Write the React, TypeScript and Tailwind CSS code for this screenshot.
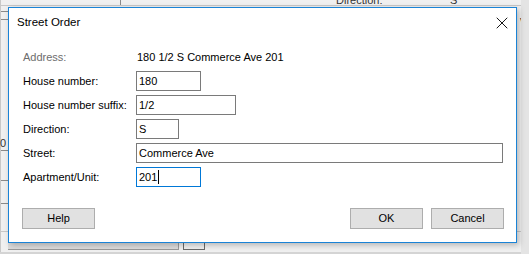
import { X } from 'lucide-react';

interface Field {
  label: string;
  value: string;
  width: string;
  focused?: boolean;
}

const FIELDS: Field[] = [
  { label: 'House number:', value: '180', width: 'w-[65px]' },
  { label: 'House number suffix:', value: '1/2', width: 'w-[100px]' },
  { label: 'Direction:', value: 'S', width: 'w-[43px]' },
  { label: 'Street:', value: 'Commerce Ave', width: 'w-[367px]' },
  { label: 'Apartment/Unit:', value: '201', width: 'w-[65px]', focused: true },
];

function WinButton({ children }: { children: string }) {
  return (
    <button className="w-[73px] h-[21px] bg-[#e1e1e1] border border-[#adadad] text-[11px] text-black flex items-center justify-center">
      {children}
    </button>
  );
}

export default function App() {
  return (
    <div
      className="relative w-[529px] h-[254px] overflow-hidden bg-[#f0f0f0]"
      style={{ fontFamily: '"Liberation Sans", Arial, sans-serif' }}
    >
      {/* obscured window behind the dialog */}
      <div className="absolute inset-x-0 top-0 h-[6px] border-b border-[#c8c8c8] flex text-[11px] text-[#333] leading-none">
        <div className="w-[121px] border-r border-[#8a8a8a]" />
        <div className="w-[215px]" />
        <span className="w-[114px] -mt-[5px]">Direction:</span>
        <span className="-mt-[5px]">S</span>
      </div>
      <div className="absolute left-[520px] top-[12px] text-[11px] text-[#333]">ve</div>
      <div className="absolute left-0 top-0 w-[8px] h-[254px] border-l border-[#c8c8c8] flex flex-col">
        <div className="h-[12px] border-b border-[#8a8a8a]" />
        <div className="h-[8px] border-b border-[#8a8a8a]" />
        <div className="h-[118px]" />
        <span className="h-[12px] text-[11px] leading-none text-[#333] -ml-px">0</span>
        <div className="border-b border-[#8a8a8a]" />
        <div className="h-[30px] border-b border-[#8a8a8a]" />
        <div className="h-[23px] border-b border-[#8a8a8a]" />
      </div>
      <div className="absolute left-0 bottom-0 w-[529px] h-[23px] border-t border-[#c8c8c8] flex items-end pb-[2px] border-b-2 border-b-[#d4d4d4]">
        <div className="ml-[8px] w-[171px] h-[9px] border-r border-b border-[#9a9a9a] bg-[#dcdcdc]" />
        <div className="ml-[4px] w-[22px] h-[12px] border border-[#6a6a6a] bg-[#f0f0f0]" />
      </div>
      <div className="absolute right-0 top-0 w-[8px] h-[254px] bg-[#e4e4e4]" />

      {/* dialog */}
      <div className="relative ml-[8px] mt-[7px] w-[509px] h-[236px] bg-white border border-[#1a83d6] shadow-[2px_2px_6px_rgba(0,0,0,0.25)] flex flex-col">
        <div className="h-[30px] flex items-center justify-between pl-[8px] pr-[4px]">
          <span className="text-[11.5px] text-black">Street Order</span>
          <X className="w-[20px] h-[20px] text-black" strokeWidth={1.1} />
        </div>

        <div className="mt-[7px] pl-[14px] flex flex-col">
          <div className="h-[24px] flex items-center">
            <span className="w-[113px] text-[11px] text-[#6d6d6d]">Address:</span>
            <span className="text-[11px] text-black pl-[1px]">180 1/2 S Commerce Ave 201</span>
          </div>
          {FIELDS.map((f) => (
            <div key={f.label} className="h-[24px] flex items-center">
              <span className="w-[113px] text-[11px] text-black">{f.label}</span>
              <div
                className={`${f.width} h-[20px] border ${
                  f.focused ? 'border-[#0078d7]' : 'border-[#7a7a7a]'
                } flex items-center pl-[2px] text-[11px] text-black`}
              >
                {f.value}
                {f.focused && <span className="w-px h-[14px] bg-black ml-px" />}
              </div>
            </div>
          ))}
        </div>

        <div className="mt-[19px] pl-[13px] pr-[12px] flex items-center">
          <WinButton>Help</WinButton>
          <div className="flex-1" />
          <div className="flex gap-[8px]">
            <WinButton>OK</WinButton>
            <WinButton>Cancel</WinButton>
          </div>
        </div>
      </div>
    </div>
  );
}
